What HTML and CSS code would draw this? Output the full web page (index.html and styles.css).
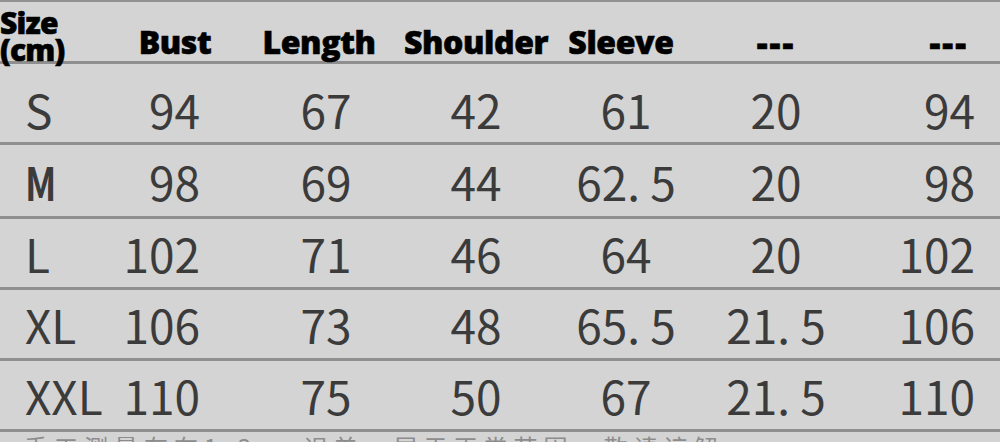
FILE: index.html
```html
<!DOCTYPE html>
<html lang="zh">
<head>
<meta charset="utf-8">
<title>Size chart</title>
<link rel="stylesheet" href="styles.css">
</head>
<body>
<div class="chart">
  <div class="row head">
    <div class="cell c1"><span class="size">Size<br>(cm)</span></div>
    <div class="cell c2">Bust</div>
    <div class="cell c3 shift">Length</div>
    <div class="cell c4">Shoulder</div>
    <div class="cell c5 shiftr">Sleeve</div>
    <div class="cell c6"><span class="dash">---</span></div>
    <div class="cell c7"><span class="dash">---</span></div>
  </div>
  <div class="row data rs">
    <div class="cell c1">S</div>
    <div class="cell c2">94</div>
    <div class="cell c3">67</div>
    <div class="cell c4">42</div>
    <div class="cell c5">61</div>
    <div class="cell c6">20</div>
    <div class="cell c7">94</div>
  </div>
  <div class="row data rm">
    <div class="cell c1"><span class="narrow">M</span></div>
    <div class="cell c2">98</div>
    <div class="cell c3">69</div>
    <div class="cell c4">44</div>
    <div class="cell c5">62. 5</div>
    <div class="cell c6">20</div>
    <div class="cell c7">98</div>
  </div>
  <div class="row data rl">
    <div class="cell c1">L</div>
    <div class="cell c2">102</div>
    <div class="cell c3">71</div>
    <div class="cell c4">46</div>
    <div class="cell c5">64</div>
    <div class="cell c6">20</div>
    <div class="cell c7">102</div>
  </div>
  <div class="row data rxl">
    <div class="cell c1">XL</div>
    <div class="cell c2">106</div>
    <div class="cell c3">73</div>
    <div class="cell c4">48</div>
    <div class="cell c5">65. 5</div>
    <div class="cell c6">21. 5</div>
    <div class="cell c7">106</div>
  </div>
  <div class="row data rxxl">
    <div class="cell c1">XXL</div>
    <div class="cell c2">110</div>
    <div class="cell c3">75</div>
    <div class="cell c4">50</div>
    <div class="cell c5">67</div>
    <div class="cell c6">21. 5</div>
    <div class="cell c7">110</div>
  </div>
  <div class="note"><span>手工测量存在1-3cm误差，属于正常范围，敬请谅解</span></div>
</div>
</body>
</html>
```

FILE: styles.css
```css
html, body {
  margin: 0;
  padding: 0;
  background: #d4d4d4;
}
.chart {
  width: 1000px;
  height: 442px;
  overflow: hidden;
  background: #d4d4d4;
  border-top: 2px solid #919191;
  box-sizing: border-box;
}
.row {
  display: flex;
  border-bottom: 3px solid #8f8f8f;
}
.cell {
  display: flex;
  justify-content: center;
  white-space: nowrap;
}
.c1 { width: 130px; justify-content: flex-start; }
.c2 { width: 90px; }
.c3 { width: 212px; }
.c4 { width: 88px; }
.c5 { width: 212px; }
.c6 { width: 88px; }
.c7 { width: 180px; }

.head {
  height: 59px;
  font-family: "Open Sans", "DejaVu Sans", sans-serif;
  font-weight: 800;
  font-size: 32px;
  color: #000;
  align-items: flex-start;
  letter-spacing: -0.4px;
  -webkit-text-stroke: 0.6px #000;
}
.head .cell {
  padding-top: 20px;
  line-height: 40px;
}
.head .c1 { padding-top: 7px; }
.head .c7 { justify-content: flex-end; padding-right: 32px; box-sizing: border-box; }
.head .shift { padding-right: 14px; box-sizing: border-box; }
.head .shiftr { padding-right: 10px; box-sizing: border-box; }
.size {
  font-size: 30px;
  line-height: 27px;
  letter-spacing: -0.8px;
}
.dash {
  letter-spacing: 2px;
  font-size: 34px;
}

.data {
  font-family: "Noto Sans CJK SC", "Noto Sans", sans-serif;
  font-size: 46px;
  color: #3b3b3b;
  align-items: center;
}
.data .cell { line-height: 46px; }
.data .c1 { padding-left: 25px; box-sizing: border-box; }
.data .c2 { justify-content: flex-end; padding-right: 20px; box-sizing: border-box; }
.data .c7 { justify-content: flex-end; padding-right: 25px; box-sizing: border-box; }

.rs { padding-top: 12px; height: 66px; }
.rm { height: 71px; }
.rl { height: 68px; }
.rxl { height: 68px; }
.rxxl { height: 68px; }
.narrow {
  display: inline-block;
  transform: scaleX(0.8);
  transform-origin: left center;
  font-weight: 700;
}

.note {
  height: 10px;
  overflow: hidden;
  padding-left: 24px;
  font-family: "Noto Sans CJK SC", sans-serif;
  font-size: 24px;
  line-height: 24px;
  color: #8c8c8c;
  letter-spacing: 6px;
}
.note span {
  display: block;
  margin-top: 3px;
}
```
